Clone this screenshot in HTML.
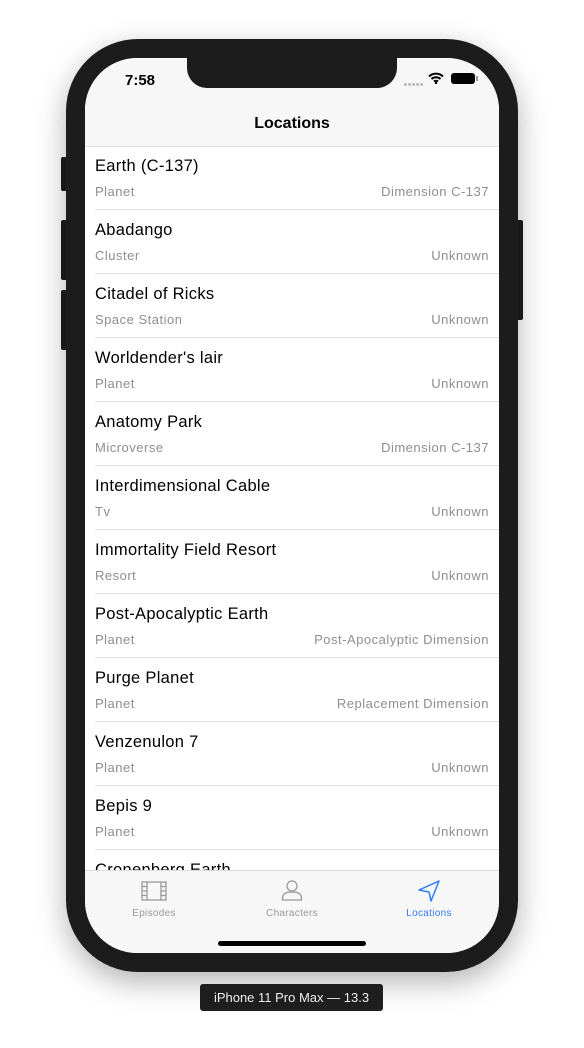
<!DOCTYPE html>
<html><head><style>
*{margin:0;padding:0;box-sizing:border-box}
body{width:584px;height:1048px;background:#fff;font-family:"Liberation Sans",sans-serif;position:relative;overflow:hidden}
.btn{position:absolute;background:#1c1c1c;border-radius:2px}
.phone{position:absolute;left:66px;top:39px;width:452px;height:933px;background:#1c1c1c;border-radius:72px;box-shadow:0 10px 30px rgba(0,0,0,.3)}
.screen{position:absolute;left:85px;top:58px;width:414px;height:895px;background:#fff;border-radius:52px;overflow:hidden}
.notch{position:absolute;left:102px;top:0;width:210px;height:30px;background:#1c1c1c;border-radius:0 0 20px 20px}
.nav{position:absolute;left:0;top:0;width:414px;height:89px;background:#f7f7f7;border-bottom:1px solid #ddd}
.time{position:absolute;left:40px;top:14px;font-size:15px;font-weight:bold}
.title{position:absolute;top:57px;width:100%;text-align:center;font-size:16px;font-weight:bold}
.row{position:absolute;left:0;width:414px;height:64px}
.row .n{position:absolute;left:10px;top:10px;font-size:16.5px;letter-spacing:0.3px;color:#000}
.row .t{position:absolute;left:10px;top:37px;font-size:13px;letter-spacing:0.5px;color:#8e8e93}
.row .d{position:absolute;right:10px;top:37px;font-size:13px;letter-spacing:0.5px;color:#8e8e93}
.row .s{position:absolute;left:10px;right:0;bottom:1px;height:1px;background:#e5e5e5}
.tab{position:absolute;left:0;top:812px;width:414px;height:83px;background:#f7f7f7;border-top:1px solid #ddd}
.ti{position:absolute;top:37px;font-size:10px;color:#999;text-align:center;width:100px;letter-spacing:0.3px}
.home{position:absolute;left:133px;top:883px;width:148px;height:5px;border-radius:3px;background:#000}
.lbl{position:absolute;left:200px;top:984px;width:183px;height:27px;background:#1e1e1e;border-radius:3px;color:#eee;font-size:13px;text-align:center;line-height:27px}
.dot{position:absolute;top:25px;width:3px;height:3px;border-radius:50%;background:#bbb}
</style></head><body>
<div class="btn" style="left:61px;top:157px;width:6px;height:34px"></div>
<div class="btn" style="left:61px;top:220px;width:6px;height:60px"></div>
<div class="btn" style="left:61px;top:290px;width:6px;height:60px"></div>
<div class="btn" style="left:516px;top:220px;width:7px;height:100px"></div>
<div class="phone"></div>
<div class="screen">
<div class="nav">
<div class="time">7:58</div>
<div class="dot" style="left:319px"></div><div class="dot" style="left:323px"></div><div class="dot" style="left:327px"></div><div class="dot" style="left:331px"></div><div class="dot" style="left:335px"></div>
<svg style="position:absolute;left:343px;top:14px" width="16" height="12" viewBox="0 0 16 12"><path d="M1 4.5A10 10 0 0 1 15 4.5M3.5 7A6.5 6.5 0 0 1 12.5 7M6 9.5A3 3 0 0 1 10 9.5" stroke="#000" stroke-width="2" fill="none"/><circle cx="8" cy="11" r="1.2"/></svg>
<div style="position:absolute;left:366px;top:15px;width:24px;height:11px;border-radius:3px;background:#000"></div>
<div style="position:absolute;left:391px;top:18px;width:2px;height:5px;background:#999"></div>
<div class="notch"></div>
<div class="title">Locations</div>
</div>
<div class="row" style="top:89px"><div class="n">Earth (C-137)</div><div class="t">Planet</div><div class="d">Dimension C-137</div><div class="s"></div></div>
<div class="row" style="top:153px"><div class="n">Abadango</div><div class="t">Cluster</div><div class="d">Unknown</div><div class="s"></div></div>
<div class="row" style="top:217px"><div class="n">Citadel of Ricks</div><div class="t">Space Station</div><div class="d">Unknown</div><div class="s"></div></div>
<div class="row" style="top:281px"><div class="n">Worldender's lair</div><div class="t">Planet</div><div class="d">Unknown</div><div class="s"></div></div>
<div class="row" style="top:345px"><div class="n">Anatomy Park</div><div class="t">Microverse</div><div class="d">Dimension C-137</div><div class="s"></div></div>
<div class="row" style="top:409px"><div class="n">Interdimensional Cable</div><div class="t">Tv</div><div class="d">Unknown</div><div class="s"></div></div>
<div class="row" style="top:473px"><div class="n">Immortality Field Resort</div><div class="t">Resort</div><div class="d">Unknown</div><div class="s"></div></div>
<div class="row" style="top:537px"><div class="n">Post-Apocalyptic Earth</div><div class="t">Planet</div><div class="d">Post-Apocalyptic Dimension</div><div class="s"></div></div>
<div class="row" style="top:601px"><div class="n">Purge Planet</div><div class="t">Planet</div><div class="d">Replacement Dimension</div><div class="s"></div></div>
<div class="row" style="top:665px"><div class="n">Venzenulon 7</div><div class="t">Planet</div><div class="d">Unknown</div><div class="s"></div></div>
<div class="row" style="top:729px"><div class="n">Bepis 9</div><div class="t">Planet</div><div class="d">Unknown</div><div class="s"></div></div>
<div class="row" style="top:793px"><div class="n">Cronenberg Earth</div></div>
<div class="tab">
<svg style="position:absolute;left:56px;top:10px" width="26" height="20" viewBox="0 0 26 20"><rect x="1" y="1" width="24" height="18" fill="none" stroke="#999" stroke-width="1.3"/><path d="M6 1V19M20 1V19M1 5.5H6M1 10H6M1 14.5H6M20 5.5H25M20 10H25M20 14.5H25" stroke="#999" stroke-width="1.3"/></svg>
<svg style="position:absolute;left:196px;top:8px" width="22" height="22" viewBox="0 0 22 22"><circle cx="11" cy="7" r="5" fill="none" stroke="#999" stroke-width="1.3"/><path d="M1.5 21V19C1.5 14 7 13 11 13S20.5 14 20.5 19V21Z" fill="none" stroke="#999" stroke-width="1.3"/></svg>
<svg style="position:absolute;left:333px;top:8px" width="22" height="24" viewBox="0 0 22 24"><path d="M1 11L21 2L13 22L11 13Z" fill="none" stroke="#2f7cf6" stroke-width="1.5" stroke-linejoin="round"/></svg>
<div class="ti" style="left:19px">Episodes</div>
<div class="ti" style="left:157px">Characters</div>
<div class="ti" style="left:294px;color:#2f7cf6">Locations</div>
</div>
<div class="home"></div>
</div>
<div class="lbl">iPhone 11 Pro Max — 13.3</div>
</body></html>
